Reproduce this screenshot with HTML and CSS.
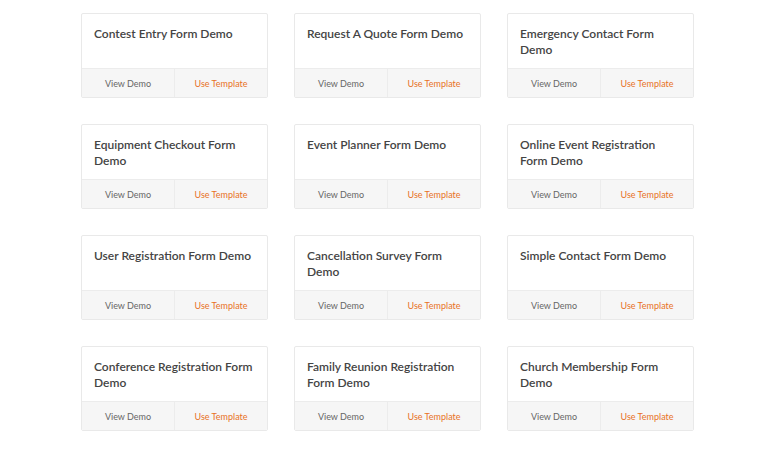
FILE: index.html
```html
<!DOCTYPE html>
<html lang="en">
<head>
    <meta charset="UTF-8">
    <meta name="viewport" content="width=device-width, initial-scale=1.0">
    <title>Form Templates</title>
    <link rel="stylesheet" href="styles.css">
</head>
<body>
    <div class="grid">
        <div class="card">
            <div class="card-title">Contest Entry Form Demo</div>
            <div class="card-actions"><a href="#" class="view">View Demo</a><a href="#" class="use">Use Template</a></div>
        </div>
        <div class="card">
            <div class="card-title">Request A Quote Form Demo</div>
            <div class="card-actions"><a href="#" class="view">View Demo</a><a href="#" class="use">Use Template</a></div>
        </div>
        <div class="card">
            <div class="card-title">Emergency Contact Form Demo</div>
            <div class="card-actions"><a href="#" class="view">View Demo</a><a href="#" class="use">Use Template</a></div>
        </div>

        <div class="card">
            <div class="card-title">Equipment Checkout Form Demo</div>
            <div class="card-actions"><a href="#" class="view">View Demo</a><a href="#" class="use">Use Template</a></div>
        </div>
        <div class="card">
            <div class="card-title">Event Planner Form Demo</div>
            <div class="card-actions"><a href="#" class="view">View Demo</a><a href="#" class="use">Use Template</a></div>
        </div>
        <div class="card">
            <div class="card-title">Online Event Registration Form Demo</div>
            <div class="card-actions"><a href="#" class="view">View Demo</a><a href="#" class="use">Use Template</a></div>
        </div>

        <div class="card">
            <div class="card-title">User Registration Form Demo</div>
            <div class="card-actions"><a href="#" class="view">View Demo</a><a href="#" class="use">Use Template</a></div>
        </div>
        <div class="card">
            <div class="card-title">Cancellation Survey Form Demo</div>
            <div class="card-actions"><a href="#" class="view">View Demo</a><a href="#" class="use">Use Template</a></div>
        </div>
        <div class="card">
            <div class="card-title">Simple Contact Form Demo</div>
            <div class="card-actions"><a href="#" class="view">View Demo</a><a href="#" class="use">Use Template</a></div>
        </div>

        <div class="card">
            <div class="card-title">Conference Registration Form Demo</div>
            <div class="card-actions"><a href="#" class="view">View Demo</a><a href="#" class="use">Use Template</a></div>
        </div>
        <div class="card">
            <div class="card-title">Family Reunion Registration Form Demo</div>
            <div class="card-actions"><a href="#" class="view">View Demo</a><a href="#" class="use">Use Template</a></div>
        </div>
        <div class="card">
            <div class="card-title">Church Membership Form Demo</div>
            <div class="card-actions"><a href="#" class="view">View Demo</a><a href="#" class="use">Use Template</a></div>
        </div>
    </div>
</body>
</html>
```

FILE: styles.css
```css
body {
    margin: 0;
    background: #fff;
    font-family: Lato, "Open Sans", sans-serif;
}
.grid {
    display: grid;
    grid-template-columns: repeat(3, 187px);
    column-gap: 26px;
    row-gap: 26px;
    padding: 13px 0 0 81px;
}
.card {
    border: 1px solid #e9e9e9;
    border-radius: 2px;
    height: 85px;
    box-sizing: border-box;
    display: flex;
    flex-direction: column;
    overflow: hidden;
}
.card-title {
    height: 54px;
    box-sizing: border-box;
    padding: 12px 12px 0 12px;
    font-size: 12px;
    line-height: 16px;
    font-weight: 600;
    color: #444;
}
.card-actions {
    flex: 1;
    display: flex;
    background: #f6f6f6;
    border-top: 1px solid #ececec;
}
.card-actions a {
    flex: 1;
    display: flex;
    align-items: center;
    justify-content: center;
    font-size: 9px;
    text-decoration: none;
}
.card-actions .view {
    color: #666;
    border-right: 1px solid #ececec;
}
.card-actions .use {
    color: #e8721f;
}
```
